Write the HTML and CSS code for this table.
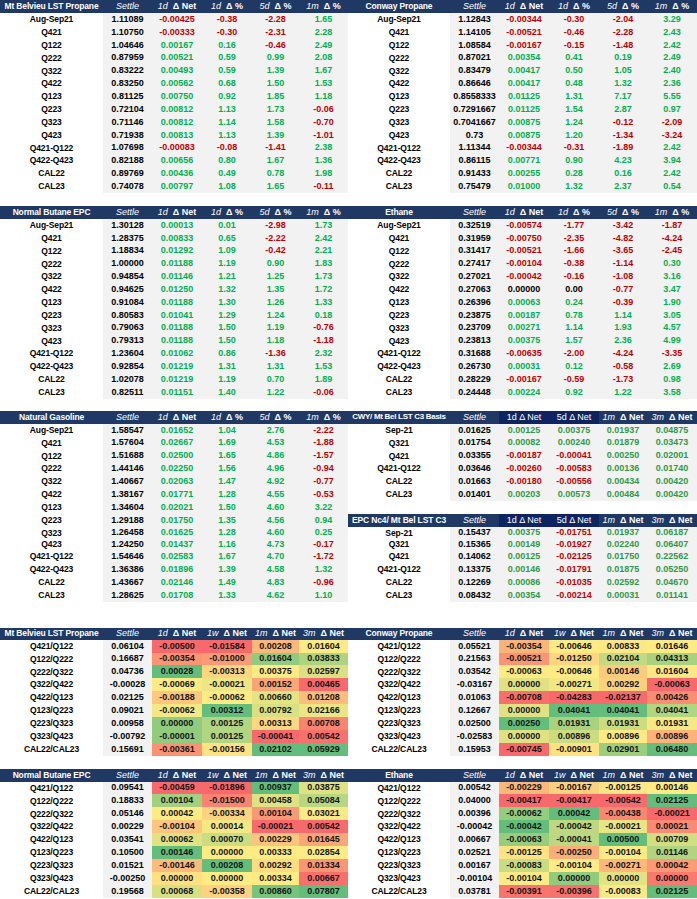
FILE: index.html
```html
<!DOCTYPE html>
<html lang="en">
<head>
<meta charset="utf-8">
<title>NGL Settlements</title>
<link rel="stylesheet" href="styles.css">
</head>
<body>
<main class="sheet">
  <section class="band band-a">
    <div class="tbl tbl-l" id="t-mtb"></div>
    <div class="tbl tbl-r" id="t-cwy"></div>
  </section>
  <section class="band band-b">
    <div class="tbl tbl-l" id="t-nc4"></div>
    <div class="tbl tbl-r" id="t-eth"></div>
  </section>
  <section class="band band-c">
    <div class="tbl tbl-l" id="t-ngas"></div>
    <div class="tbl tbl-r" id="t-basis"></div>
  </section>
  <section class="band band-d">
    <div class="tbl tbl-l" id="s-mtb"></div>
    <div class="tbl tbl-r" id="s-cwy"></div>
  </section>
  <section class="band band-e">
    <div class="tbl tbl-l" id="s-nc4"></div>
    <div class="tbl tbl-r" id="s-eth"></div>
  </section>
</main>
<script src="script.js"></script>
</body>
</html>
```

FILE: styles.css
```css
html, body {
  margin: 0;
  padding: 0;
  background: #ffffff;
}
body {
  font-family: "Liberation Sans", Arial, sans-serif;
  font-weight: bold;
  font-size: 9px;
  color: #000000;
}
.sheet {
  width: 697px;
}
.band {
  display: flex;
}
.band-a { margin-bottom: 13px; }
.band-b { margin-bottom: 12px; }
.band-c { margin-bottom: 26px; }
.band-d { margin-bottom: 13px; }

.tbl {
  display: grid;
}
.tbl-l {
  grid-template-columns: 103px 49px 50px 50px 47px 49px;
}
.tbl-r {
  grid-template-columns: 102px 49px 50px 50px 48px 50px;
}
.band-a .tbl,
.band-b .tbl {
  grid-template-rows: 13px repeat(14, 12.857px);
}
.band-c .tbl {
  grid-template-rows: 13px repeat(9, 12.86px) 10.3px repeat(4, 13px);
}
.band-d .tbl {
  grid-template-rows: 12px repeat(9, 12.89px);
}
.band-e .tbl {
  grid-template-rows: 13px repeat(9, 12.9px);
}

.c {
  display: flex;
  align-items: center;
  justify-content: center;
  white-space: nowrap;
  overflow: hidden;
  line-height: 1;
  min-width: 0;
}
.h {
  background: #1f3864;
  color: #ffffff;
}
.h-txt {
  white-space: pre;
}
.h i {
  font-weight: normal;
}
.h-title {
  font-size: 8.5px;
  letter-spacing: -0.15px;
}
.h-fit {
  font-size: 8px;
  letter-spacing: -0.3px;
}
.h-dark {
  background: #0e2461;
  font-weight: normal;
}
.lbl {
  font-size: 8.5px;
  letter-spacing: -0.1px;
}
.gray {
  background: #f2f2f2;
}
.pos { color: #00b050; }
.neg { color: #c00000; }
.zero { color: #000000; }
.alt.pos { color: #2e9a46; }
.heat {
  color: #141414;
}
```

FILE: script.js
```js
(function () {
  var RED = [248, 105, 107];
  var YEL = [255, 235, 132];
  var GRN = [99, 190, 123];

  var HEAD_STD = ['<i>Settle</i>', '<i>1d</i>  &Delta; Net', '<i>1d</i>  &Delta; %', '<i>5d</i>  &Delta; %', '<i>1m</i>  &Delta; %'];
  var HEAD_BASIS = ['<i>Settle</i>', { t: '1d &Delta; Net', cls: 'h-dark' }, { t: '5d &Delta; Net', cls: 'h-dark' }, '<i>1m</i>  &Delta; Net', '<i>3m</i>  &Delta; Net'];
  var HEAD_HEAT = ['<i>Settle</i>', '<i>1d</i>  &Delta; Net', '<i>1w</i>  &Delta; Net', '<i>1m</i>  &Delta; Net', '<i>3m</i>  &Delta; Net'];

  function cell(parent, cls, html) {
    var d = document.createElement('div');
    d.className = 'c ' + cls;
    d.innerHTML = html;
    parent.appendChild(d);
    return d;
  }

  function header(el, title, heads, titleCls) {
    cell(el, 'h h-title ' + (titleCls || ''), '<span>' + title + '</span>');
    heads.forEach(function (h) {
      if (typeof h === 'string') cell(el, 'h', '<span class="h-txt">' + h + '</span>');
      else cell(el, 'h ' + h.cls, '<span class="h-txt">' + h.t + '</span>');
    });
  }

  function blank(el) {
    for (var i = 0; i < 6; i++) cell(el, 'blank', '');
  }

  function sign(v) {
    var n = parseFloat(v);
    return n > 0 ? 'pos' : (n < 0 ? 'neg' : 'zero');
  }

  function rowsStd(el, rows, extra) {
    rows.forEach(function (r) {
      cell(el, 'lbl', r[0]);
      cell(el, 'num gray', r[1]);
      for (var i = 2; i < r.length; i++) {
        cell(el, 'num gray ' + sign(r[i]) + (extra ? ' ' + extra : ''), r[i]);
      }
    });
  }

  function mix(a, b, t) {
    t = Math.max(0, Math.min(1, t));
    return [0, 1, 2].map(function (i) { return Math.round(a[i] + (b[i] - a[i]) * t); });
  }

  function scale(vals) {
    var s = vals.slice().sort(function (a, b) { return a - b; });
    var n = s.length, min = s[0], max = s[n - 1];
    var k = (n - 1) * 0.5, lo = Math.floor(k), hi = Math.ceil(k);
    var mid = s[lo] + (s[hi] - s[lo]) * (k - lo);
    return function (v) {
      var c;
      if (v <= mid) c = mix(RED, YEL, mid === min ? 1 : (v - min) / (mid - min));
      else c = mix(YEL, GRN, max === mid ? 1 : (v - mid) / (max - mid));
      return 'rgb(' + c.join(',') + ')';
    };
  }

  function rowsHeat(el, rows) {
    var cols = [2, 3, 4, 5];
    var scales = cols.map(function (ci) {
      return scale(rows.map(function (r) { return parseFloat(r[ci]); }));
    });
    rows.forEach(function (r) {
      cell(el, 'lbl', r[0]);
      cell(el, 'num gray', r[1]);
      cols.forEach(function (ci, k) {
        var d = cell(el, 'num heat', r[ci]);
        d.style.backgroundColor = scales[k](parseFloat(r[ci]));
      });
    });
  }

  function std(id, title, rows) {
    var el = document.getElementById(id);
    header(el, title, HEAD_STD);
    rowsStd(el, rows);
  }

  function heat(id, title, rows) {
    var el = document.getElementById(id);
    header(el, title, HEAD_HEAT);
    rowsHeat(el, rows);
  }

  std('t-mtb', 'Mt Belvieu LST Propane', [
    ['Aug-Sep21', '1.11089', '-0.00425', '-0.38', '-2.28', '1.65'],
    ['Q421', '1.10750', '-0.00333', '-0.30', '-2.31', '2.28'],
    ['Q122', '1.04646', '0.00167', '0.16', '-0.46', '2.49'],
    ['Q222', '0.87959', '0.00521', '0.59', '0.99', '2.08'],
    ['Q322', '0.83222', '0.00493', '0.59', '1.39', '1.67'],
    ['Q422', '0.83250', '0.00562', '0.68', '1.50', '1.53'],
    ['Q123', '0.81125', '0.00750', '0.92', '1.85', '1.18'],
    ['Q223', '0.72104', '0.00812', '1.13', '1.73', '-0.06'],
    ['Q323', '0.71146', '0.00812', '1.14', '1.58', '-0.70'],
    ['Q423', '0.71938', '0.00813', '1.13', '1.39', '-1.01'],
    ['Q421-Q122', '1.07698', '-0.00083', '-0.08', '-1.41', '2.38'],
    ['Q422-Q423', '0.82188', '0.00656', '0.80', '1.67', '1.36'],
    ['CAL22', '0.89769', '0.00436', '0.49', '0.78', '1.98'],
    ['CAL23', '0.74078', '0.00797', '1.08', '1.65', '-0.11']
  ]);

  std('t-cwy', 'Conway Propane', [
    ['Aug-Sep21', '1.12843', '-0.00344', '-0.30', '-2.04', '3.29'],
    ['Q421', '1.14105', '-0.00521', '-0.46', '-2.28', '2.43'],
    ['Q122', '1.08584', '-0.00167', '-0.15', '-1.48', '2.42'],
    ['Q222', '0.87021', '0.00354', '0.41', '0.19', '2.49'],
    ['Q322', '0.83479', '0.00417', '0.50', '1.05', '2.40'],
    ['Q422', '0.86646', '0.00417', '0.48', '1.32', '2.36'],
    ['Q123', '0.8558333', '0.01125', '1.31', '7.17', '5.55'],
    ['Q223', '0.7291667', '0.01125', '1.54', '2.87', '0.97'],
    ['Q323', '0.7041667', '0.00875', '1.24', '-0.12', '-2.09'],
    ['Q423', '0.73', '0.00875', '1.20', '-1.34', '-3.24'],
    ['Q421-Q122', '1.11344', '-0.00344', '-0.31', '-1.89', '2.42'],
    ['Q422-Q423', '0.86115', '0.00771', '0.90', '4.23', '3.94'],
    ['CAL22', '0.91433', '0.00255', '0.28', '0.16', '2.42'],
    ['CAL23', '0.75479', '0.01000', '1.32', '2.37', '0.54']
  ]);

  std('t-nc4', 'Normal Butane EPC', [
    ['Aug-Sep21', '1.30128', '0.00013', '0.01', '-2.98', '1.73'],
    ['Q421', '1.28375', '0.00833', '0.65', '-2.22', '2.42'],
    ['Q122', '1.18834', '0.01292', '1.09', '-0.42', '2.21'],
    ['Q222', '1.00000', '0.01188', '1.19', '0.90', '1.83'],
    ['Q322', '0.94854', '0.01146', '1.21', '1.25', '1.73'],
    ['Q422', '0.94625', '0.01250', '1.32', '1.35', '1.72'],
    ['Q123', '0.91084', '0.01188', '1.30', '1.26', '1.33'],
    ['Q223', '0.80583', '0.01041', '1.29', '1.24', '0.18'],
    ['Q323', '0.79063', '0.01188', '1.50', '1.19', '-0.76'],
    ['Q423', '0.79313', '0.01188', '1.50', '1.18', '-1.18'],
    ['Q421-Q122', '1.23604', '0.01062', '0.86', '-1.36', '2.32'],
    ['Q422-Q423', '0.92854', '0.01219', '1.31', '1.31', '1.53'],
    ['CAL22', '1.02078', '0.01219', '1.19', '0.70', '1.89'],
    ['CAL23', '0.82511', '0.01151', '1.40', '1.22', '-0.06']
  ]);

  std('t-eth', 'Ethane', [
    ['Aug-Sep21', '0.32519', '-0.00574', '-1.77', '-3.42', '-1.87'],
    ['Q421', '0.31959', '-0.00750', '-2.35', '-4.82', '-4.24'],
    ['Q122', '0.31417', '-0.00521', '-1.66', '-3.65', '-2.45'],
    ['Q222', '0.27417', '-0.00104', '-0.38', '-1.14', '0.30'],
    ['Q322', '0.27021', '-0.00042', '-0.16', '-1.08', '3.16'],
    ['Q422', '0.27063', '0.00000', '0.00', '-0.77', '3.47'],
    ['Q123', '0.26396', '0.00063', '0.24', '-0.39', '1.90'],
    ['Q223', '0.23875', '0.00187', '0.78', '1.14', '3.05'],
    ['Q323', '0.23709', '0.00271', '1.14', '1.93', '4.57'],
    ['Q423', '0.23813', '0.00375', '1.57', '2.36', '4.99'],
    ['Q421-Q122', '0.31688', '-0.00635', '-2.00', '-4.24', '-3.35'],
    ['Q422-Q423', '0.26730', '0.00031', '0.12', '-0.58', '2.69'],
    ['CAL22', '0.28229', '-0.00167', '-0.59', '-1.73', '0.98'],
    ['CAL23', '0.24448', '0.00224', '0.92', '1.22', '3.58']
  ]);

  std('t-ngas', 'Natural Gasoline', [
    ['Aug-Sep21', '1.58547', '0.01652', '1.04', '2.76', '-2.22'],
    ['Q421', '1.57604', '0.02667', '1.69', '4.53', '-1.88'],
    ['Q122', '1.51688', '0.02500', '1.65', '4.86', '-1.57'],
    ['Q222', '1.44146', '0.02250', '1.56', '4.96', '-0.94'],
    ['Q322', '1.40667', '0.02063', '1.47', '4.92', '-0.77'],
    ['Q422', '1.38167', '0.01771', '1.28', '4.55', '-0.53'],
    ['Q123', '1.34604', '0.02021', '1.50', '4.60', '3.22'],
    ['Q223', '1.29188', '0.01750', '1.35', '4.56', '0.94'],
    ['Q323', '1.26458', '0.01625', '1.28', '4.60', '0.25'],
    ['Q423', '1.24250', '0.01437', '1.16', '4.73', '-0.17'],
    ['Q421-Q122', '1.54646', '0.02583', '1.67', '4.70', '-1.72'],
    ['Q422-Q423', '1.36386', '0.01896', '1.39', '4.58', '1.32'],
    ['CAL22', '1.43667', '0.02146', '1.49', '4.83', '-0.96'],
    ['CAL23', '1.28625', '0.01708', '1.33', '4.62', '1.10']
  ]);

  (function () {
    var el = document.getElementById('t-basis');
    header(el, 'CWY/ Mt Bel LST C3 Basis', HEAD_BASIS, 'h-fit');
    rowsStd(el, [
      ['Sep-21', '0.01625', '0.00125', '0.00375', '0.01937', '0.04875'],
      ['Q321', '0.01754', '0.00082', '0.00240', '0.01879', '0.03473'],
      ['Q421', '0.03355', '-0.00187', '-0.00041', '0.00250', '0.02001'],
      ['Q421-Q122', '0.03646', '-0.00260', '-0.00583', '0.00136', '0.01740'],
      ['CAL22', '0.01663', '-0.00180', '-0.00556', '0.00434', '0.00420'],
      ['CAL23', '0.01401', '0.00203', '0.00573', '0.00484', '0.00420']
    ], 'alt');
    blank(el);
    header(el, 'EPC Nc4/ Mt Bel LST C3', HEAD_BASIS);
    rowsStd(el, [
      ['Sep-21', '0.15437', '0.00375', '-0.01751', '0.01937', '0.06187'],
      ['Q321', '0.15365', '0.00149', '-0.01927', '0.02240', '0.06407'],
      ['Q421', '0.14062', '0.00125', '-0.02125', '0.01750', '0.22562'],
      ['Q421-Q122', '0.13375', '0.00146', '-0.01791', '0.01875', '0.05250'],
      ['CAL22', '0.12269', '0.00086', '-0.01035', '0.02592', '0.04670'],
      ['CAL23', '0.08432', '0.00354', '-0.00214', '0.00031', '0.01141']
    ], 'alt');
  })();

  heat('s-mtb', 'Mt Belvieu LST Propane', [
    ['Q421/Q122', '0.06104', '-0.00500', '-0.01584', '0.00208', '0.01604'],
    ['Q122/Q222', '0.16687', '-0.00354', '-0.01000', '0.01604', '0.03833'],
    ['Q222/Q322', '0.04736', '0.00028', '-0.00313', '0.00375', '0.02597'],
    ['Q322/Q422', '-0.00028', '-0.00069', '-0.00021', '0.00152', '0.00465'],
    ['Q422/Q123', '0.02125', '-0.00188', '-0.00062', '0.00660', '0.01208'],
    ['Q123/Q223', '0.09021', '-0.00062', '0.00312', '0.00792', '0.02166'],
    ['Q223/Q323', '0.00958', '0.00000', '0.00125', '0.00313', '0.00708'],
    ['Q323/Q423', '-0.00792', '-0.00001', '0.00125', '-0.00041', '0.00542'],
    ['CAL22/CAL23', '0.15691', '-0.00361', '-0.00156', '0.02102', '0.05929']
  ]);

  heat('s-cwy', 'Conway Propane', [
    ['Q421/Q122', '0.05521', '-0.00354', '-0.00646', '0.00833', '0.01646'],
    ['Q122/Q222', '0.21563', '-0.00521', '-0.01250', '0.02104', '0.04313'],
    ['Q222/Q322', '0.03542', '-0.00063', '-0.00646', '0.00146', '0.01604'],
    ['Q322/Q422', '-0.03167', '0.00000', '-0.00271', '0.00292', '-0.00063'],
    ['Q422/Q123', '0.01063', '-0.00708', '-0.04283', '-0.02137', '0.00426'],
    ['Q123/Q223', '0.12667', '0.00000', '0.04041', '0.04041', '0.04041'],
    ['Q223/Q323', '0.02500', '0.00250', '0.01931', '0.01931', '0.01931'],
    ['Q323/Q423', '-0.02583', '0.00000', '0.00896', '0.00896', '0.00896'],
    ['CAL22/CAL23', '0.15953', '-0.00745', '-0.00901', '0.02901', '0.06480']
  ]);

  heat('s-nc4', 'Normal Butane EPC', [
    ['Q421/Q122', '0.09541', '-0.00459', '-0.01896', '0.00937', '0.03875'],
    ['Q122/Q222', '0.18833', '0.00104', '-0.01500', '0.00458', '0.05084'],
    ['Q222/Q322', '0.05146', '0.00042', '-0.00334', '0.00104', '0.03021'],
    ['Q322/Q422', '0.00229', '-0.00104', '0.00014', '-0.00021', '0.00542'],
    ['Q422/Q123', '0.03541', '0.00062', '0.00070', '0.00229', '0.01645'],
    ['Q123/Q223', '0.10500', '0.00146', '0.00000', '0.00333', '0.02854'],
    ['Q223/Q323', '0.01521', '-0.00146', '0.00208', '0.00292', '0.01334'],
    ['Q323/Q423', '-0.00250', '0.00000', '0.00000', '0.00334', '0.00667'],
    ['CAL22/CAL23', '0.19568', '0.00068', '-0.00358', '0.00860', '0.07807']
  ]);

  heat('s-eth', 'Ethane', [
    ['Q421/Q122', '0.00542', '-0.00229', '-0.00167', '-0.00125', '0.00146'],
    ['Q122/Q222', '0.04000', '-0.00417', '-0.00417', '-0.00542', '0.02125'],
    ['Q222/Q322', '0.00396', '-0.00062', '0.00042', '-0.00438', '-0.00021'],
    ['Q322/Q422', '-0.00042', '-0.00042', '-0.00042', '-0.00021', '0.00021'],
    ['Q422/Q123', '0.00667', '-0.00063', '-0.00041', '0.00500', '0.00709'],
    ['Q123/Q223', '0.02521', '-0.00125', '-0.00250', '-0.00104', '0.01146'],
    ['Q223/Q323', '0.00167', '-0.00083', '-0.00104', '-0.00271', '0.00042'],
    ['Q323/Q423', '-0.00104', '-0.00104', '0.00000', '0.00000', '0.00000'],
    ['CAL22/CAL23', '0.03781', '-0.00391', '-0.00396', '-0.00083', '0.02125']
  ]);
})();
```
